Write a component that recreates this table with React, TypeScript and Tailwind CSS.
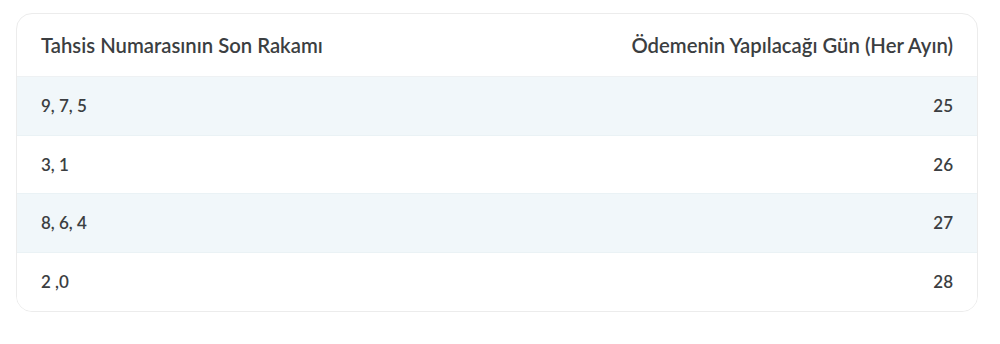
import React from 'react';

const rows = [
  { digits: '9, 7, 5', day: '25' },
  { digits: '3, 1', day: '26' },
  { digits: '8, 6, 4', day: '27' },
  { digits: '2 ,0', day: '28' },
];

export default function App() {
  return (
    <div className="w-[1000px] h-[344px] bg-white pt-[13px] pl-[16px]" style={{ fontFamily: 'Lato, "Noto Sans", sans-serif' }}>
      <div className="w-[962px] rounded-[16px] border border-[#ececec] overflow-hidden text-[#3b3e41]">
        <div className="flex items-center justify-between h-[63px] px-[24px] border-b border-[#eef1f3] text-[20.3px] font-semibold">
          <span>Tahsis Numarasının Son Rakamı</span>
          <span>Ödemenin Yapılacağı Gün (Her Ayın)</span>
        </div>
        {rows.map((r, i) => (
          <div
            key={r.digits}
            className={`flex items-center justify-between h-[58.5px] px-[24px] text-[17px] font-semibold ${i % 2 === 0 ? 'bg-[#f1f7fa]' : 'bg-white'} ${i < rows.length - 1 ? 'border-b border-[#eaf2f5]' : ''}`}
          >
            <span>{r.digits}</span>
            <span>{r.day}</span>
          </div>
        ))}
      </div>
    </div>
  );
}
